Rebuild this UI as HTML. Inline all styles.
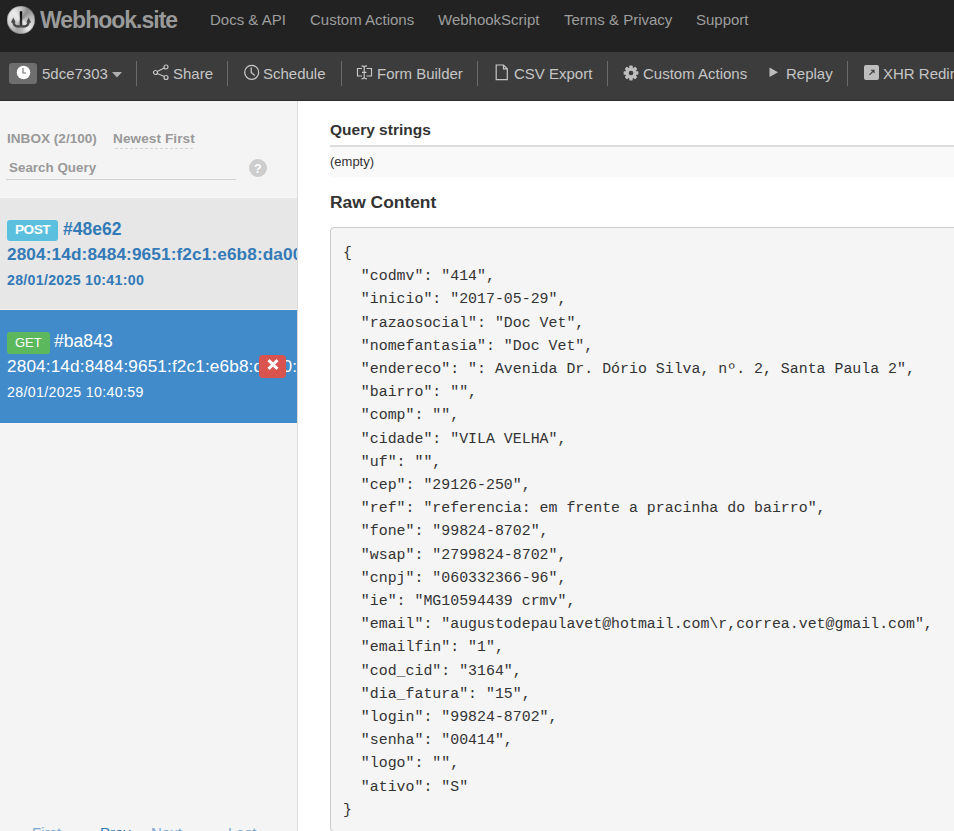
<!DOCTYPE html>
<html><head><meta charset="utf-8">
<style>
html,body{margin:0;padding:0;width:954px;height:831px;overflow:hidden;background:#fff;font-family:"Liberation Sans",sans-serif;}
.a{position:absolute;white-space:nowrap;line-height:1;}
#nav{position:absolute;left:0;top:0;width:954px;height:52px;background:#222;}
#tb{position:absolute;left:0;top:52px;width:954px;height:48px;background:#3c3c3c;border-bottom:1px solid #2c2c2c;}
.nl{color:#9d9d9d;font-size:15px;}
.tt{color:#c6c6c6;font-size:15px;}
.sep{position:absolute;top:61px;width:1px;height:25px;background:#6a6a6a;}
#side{position:absolute;left:0;top:101px;width:297px;height:730px;background:#f4f4f4;border-right:1px solid #dcdcdc;}
#main{position:absolute;left:298px;top:101px;width:656px;height:730px;background:#fff;}
.code{font-family:"Liberation Mono",monospace;font-size:14.9px;color:#333;white-space:pre;}
</style></head><body>
<div id="nav">
  <div class="a" style="left:7px;top:6px;width:28px;height:28px;border-radius:50%;background:conic-gradient(from 0deg,#c4c4c4 0deg,#8e8e8e 35deg,#bdbdbd 80deg,#d6d6d6 110deg,#eeeeee 140deg,#b5b5b5 175deg,#a4a4a4 200deg,#cdcdcd 240deg,#e2e2e2 280deg,#eaeaea 320deg,#c4c4c4 360deg);box-shadow:inset 0 0 1px 0.5px rgba(0,0,0,0.35)"></div>
  <svg class="a" style="left:0;top:0" width="40" height="40" viewBox="0 0 40 40">
    <defs><linearGradient id="st" x1="0" y1="0" x2="0" y2="1"><stop offset="0" stop-color="#050505"/><stop offset="1" stop-color="#3a3a3a"/></linearGradient></defs><path d="M13.4 20 V21 Q13.4 26.5 18.3 26.5 Q21 26.5 21 25.2 Q21 26.5 23.7 26.5 Q28.6 26.5 28.6 21 V20" stroke="#4a4a4a" stroke-width="2.4" fill="none"/>
    <path d="M13.3 17.6 L10.9 22.6 L15.7 22.6 Z M28.7 17.6 L26.3 22.6 L31.1 22.6 Z" fill="#4a4a4a"/>
    <rect x="19.8" y="11.3" width="2.4" height="14.5" fill="url(#st)"/>
  </svg>
  <div class="a" style="left:40px;top:9px;font-size:23px;font-weight:bold;color:#9a9a9a;letter-spacing:-1px">Webhook.site</div>
  <div class="a nl" style="left:210px;top:11.5px">Docs &amp; API</div>
  <div class="a nl" style="left:310px;top:11.5px">Custom Actions</div>
  <div class="a nl" style="left:438px;top:11.5px">WebhookScript</div>
  <div class="a nl" style="left:564px;top:11.5px">Terms &amp; Privacy</div>
  <div class="a nl" style="left:696px;top:11.5px">Support</div>
</div>
<div id="tb"></div>
<!-- toolbar items -->
<div class="a" style="left:9px;top:63px;width:28px;height:21px;background:#6e6e6e;border-radius:3px"></div>
<svg class="a" style="left:16px;top:65px" width="15" height="15" viewBox="0 0 15 15">
  <circle cx="7.5" cy="7.5" r="6.8" fill="#fff"/>
  <path d="M7 3 V8 H10" stroke="#6e6e6e" stroke-width="1.1" fill="none"/>
</svg>
<div class="a tt" style="left:42px;top:66px">5dce7303</div>
<svg class="a" style="left:112px;top:72px" width="10" height="6" viewBox="0 0 10 6"><path d="M0 0 H10 L5 5.5 Z" fill="#b0b0b0"/></svg>
<div class="sep" style="left:136px"></div>
<svg class="a" style="left:152px;top:64px" width="18" height="17" viewBox="0 0 18 17">
  <g stroke="#c6c6c6" stroke-width="1.2" fill="none">
  <circle cx="3.5" cy="8.5" r="2"/><circle cx="14" cy="3" r="2"/><circle cx="14" cy="13.5" r="2"/>
  <path d="M5.3 7.5 L12.2 4 M5.3 9.5 L12.2 12.5"/></g>
</svg>
<div class="a tt" style="left:173px;top:66px">Share</div>
<div class="sep" style="left:227px"></div>
<svg class="a" style="left:243px;top:64px" width="18" height="17" viewBox="0 0 18 17">
  <g stroke="#c6c6c6" stroke-width="1.3" fill="none">
  <circle cx="8.7" cy="8.3" r="7"/><path d="M8.2 3.5 V8.5 L11.8 11.5"/></g>
</svg>
<div class="a tt" style="left:263px;top:66px">Schedule</div>
<div class="sep" style="left:341px"></div>
<svg class="a" style="left:356px;top:65px" width="18" height="16" viewBox="0 0 18 16">
  <g stroke="#c6c6c6" stroke-width="1.2" fill="none">
  <path d="M6 3.5 H1.5 V11 H6 M10.5 3.5 H15.5 V11 H10.5"/>
  <path d="M8.2 1 V13.5 M5.5 0.8 C7 0.8 8.2 1.5 8.2 2.5 C8.2 1.5 9.4 0.8 11 0.8 M5.5 13.8 C7 13.8 8.2 13 8.2 12 C8.2 13 9.4 13.8 11 13.8 M6 7.3 H10.5"/></g>
</svg>
<div class="a tt" style="left:377px;top:66px">Form Builder</div>
<div class="sep" style="left:477px"></div>
<svg class="a" style="left:495px;top:64px" width="14" height="17" viewBox="0 0 14 17">
  <path d="M1.2 1 H8.5 L12.3 4.8 V15.6 H1.2 Z M8.5 1 V4.8 H12.3" stroke="#c6c6c6" stroke-width="1.2" fill="none"/>
</svg>
<div class="a tt" style="left:514px;top:66px">CSV Export</div>
<div class="sep" style="left:607px"></div>
<svg class="a" style="left:623px;top:65px" width="16" height="16" viewBox="0 0 18 18">
  <g fill="#bdbdbd">
  <circle cx="9" cy="9" r="6.4"/>
  <rect x="7.1" y="0.7" width="3.8" height="16.6" rx="0.8"/>
  <rect x="7.1" y="0.7" width="3.8" height="16.6" rx="0.8" transform="rotate(45 9 9)"/>
  <rect x="7.1" y="0.7" width="3.8" height="16.6" rx="0.8" transform="rotate(90 9 9)"/>
  <rect x="7.1" y="0.7" width="3.8" height="16.6" rx="0.8" transform="rotate(135 9 9)"/>
  </g>
  <circle cx="9" cy="9" r="2.6" fill="#3c3c3c"/>
</svg>
<div class="a tt" style="left:643px;top:66px">Custom Actions</div>
<svg class="a" style="left:769px;top:67px" width="10" height="11" viewBox="0 0 10 11"><path d="M0.5 0.5 L9 5.2 L0.5 10 Z" fill="#bdbdbd"/></svg>
<div class="a tt" style="left:786px;top:66px">Replay</div>
<div class="sep" style="left:847px"></div>
<div class="a" style="left:864px;top:65px;width:15px;height:15px;background:#bdbdbd;border-radius:2px"></div>
<svg class="a" style="left:864px;top:65px" width="15" height="15" viewBox="0 0 15 15"><path d="M5.5 9.8 L9.8 5.5 M6.9 5.2 H10 V8.3" stroke="#3c3c3c" stroke-width="1.1" fill="none"/></svg>
<div class="a tt" style="left:883px;top:66px">XHR Redirect</div>

<div id="side"></div>
<div class="a" style="left:7px;top:132px;font-size:13.6px;font-weight:bold;color:#999">INBOX (2/100)</div>
<div class="a" style="left:113px;top:132px;font-size:13.6px;letter-spacing:0.08px;font-weight:bold;color:#999">Newest First</div>
<div class="a" style="left:115px;top:148px;width:78px;height:0;border-top:1px dashed #d4d4d4"></div>
<div class="a" style="left:9px;top:160.5px;font-size:13.4px;font-weight:bold;color:#999">Search Query</div>
<div class="a" style="left:6px;top:179px;width:230px;height:1px;background:#d2d2d2"></div>
<div class="a" style="left:248.5px;top:158.6px;width:18.5px;height:18.5px;border-radius:50%;background:#cdcdcd;color:#fff;font-weight:bold;font-size:12.5px;line-height:20px;text-align:center">?</div>

<div class="a" style="left:0;top:197px;width:297px;height:1px;background:#f7f7f7"></div>
<div class="a" style="left:0;top:198px;width:297px;height:111px;background:#e7e7e7;overflow:hidden">
  <div class="a" style="left:7px;top:22px;width:51px;height:21px;background:#5bc0de;border-radius:3px"></div>
  <div class="a" style="left:15px;top:25px;font-size:13.6px;font-weight:bold;color:#fff;letter-spacing:-0.45px">POST</div>
  <div class="a" style="left:63px;top:23px;font-size:17.5px;font-weight:bold;color:#337ab7">#48e62</div>
  <div class="a" style="left:7px;top:48px;font-size:17.2px;font-weight:bold;color:#337ab7;letter-spacing:0.12px">2804:14d:8484:9651:f2c1:e6b8:da00:1</div>
  <div class="a" style="left:7px;top:75px;font-size:14.2px;font-weight:bold;color:#337ab7;letter-spacing:0.28px">28/01/2025 10:41:00</div>
</div>
<div class="a" style="left:0;top:309px;width:297px;height:1px;background:#f5f1ee"></div>
<div class="a" style="left:0;top:310px;width:297px;height:113px;background:#428bca;overflow:hidden">
  <div class="a" style="left:7px;top:22px;width:43px;height:22px;background:#5cb85c;border-radius:3px"></div>
  <div class="a" style="left:15px;top:26px;font-size:13px;color:#fff">GET</div>
  <div class="a" style="left:54px;top:23px;font-size:17.6px;color:#fff">#ba843</div>
  <div class="a" style="left:7px;top:48px;font-size:17.2px;color:#fff;letter-spacing:0.13px">2804:14d:8484:9651:f2c1:e6b8:da00:1</div>
  <div class="a" style="left:7px;top:75px;font-size:14.2px;color:#fff;letter-spacing:0.35px">28/01/2025 10:40:59</div>
  <div class="a" style="left:259px;top:45px;width:27px;height:23px;background:#d9534f;border-radius:4px"></div>
  <svg class="a" style="left:267px;top:49px" width="12" height="11" viewBox="0 0 12 11"><path d="M1.5 1.2 L10.5 9.8 M10.5 1.2 L1.5 9.8" stroke="#fff" stroke-width="3"/></svg>
</div>
<div class="a" style="left:0;top:423px;width:297px;height:1px;background:#fbf8f4"></div>
<div class="a" style="left:32px;top:825px;font-size:15px;color:#7aaad4">First</div>
<div class="a" style="left:100px;top:825px;font-size:15px;color:#337ab7">Prev</div>
<div class="a" style="left:151px;top:825px;font-size:15px;color:#7aaad4">Next</div>
<div class="a" style="left:228px;top:825px;font-size:15px;color:#7aaad4">Last</div>
<div id="main"></div>
<div class="a" style="left:330px;top:122px;font-size:15.5px;font-weight:bold;color:#333">Query strings</div>
<div class="a" style="left:330px;top:145px;width:624px;height:2px;background:#dddddd"></div>
<div class="a" style="left:330px;top:147px;width:624px;height:30px;background:#f9f9f9"></div>
<div class="a" style="left:330px;top:155px;font-size:13px;color:#333">(empty)</div>
<div class="a" style="left:330px;top:194px;font-size:17.4px;font-weight:bold;color:#333">Raw Content</div>
<div class="a" style="left:330px;top:227px;width:700px;height:605px;background:#f5f5f5;border:1px solid #cccccc;border-radius:4px;box-sizing:border-box"></div>
<pre class="a code" style="left:343px;top:242px;margin:0;line-height:23.2px">{
  "codmv": "414",
  "inicio": "2017-05-29",
  "razaosocial": "Doc Vet",
  "nomefantasia": "Doc Vet",
  "endereco": ": Avenida Dr. Dório Silva, nº. 2, Santa Paula 2",
  "bairro": "",
  "comp": "",
  "cidade": "VILA VELHA",
  "uf": "",
  "cep": "29126-250",
  "ref": "referencia: em frente a pracinha do bairro",
  "fone": "99824-8702",
  "wsap": "2799824-8702",
  "cnpj": "060332366-96",
  "ie": "MG10594439 crmv",
  "email": "augustodepaulavet@hotmail.com\r,correa.vet@gmail.com",
  "emailfin": "1",
  "cod_cid": "3164",
  "dia_fatura": "15",
  "login": "99824-8702",
  "senha": "00414",
  "logo": "",
  "ativo": "S"
}</pre>
</body></html>
